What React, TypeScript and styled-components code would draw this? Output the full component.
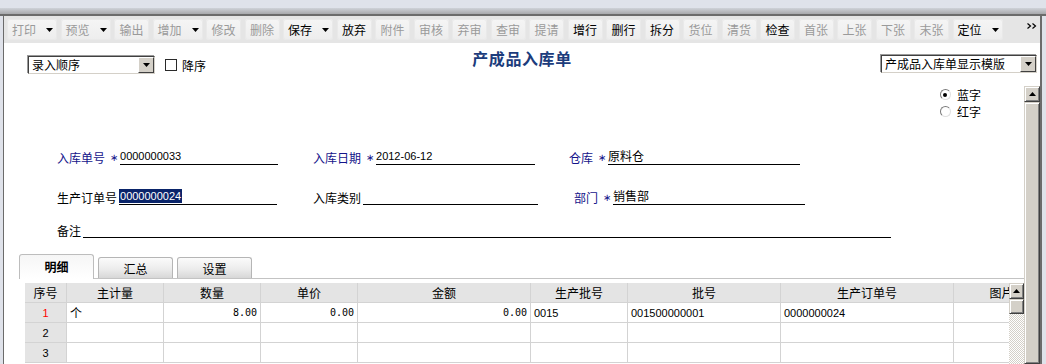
import styled, { createGlobalStyle } from "styled-components";

const GlobalStyle = createGlobalStyle`
  html, body {
    margin: 0;
    padding: 0;
    background: #dfe2ea;
  }
  body {
    font-family: "Noto Sans CJK SC", "Noto Sans", sans-serif;
    font-size: 12px;
    color: #000;
  }
  *, *::before, *::after {
    box-sizing: border-box;
  }
`;

const Screen = styled.div`
  width: 1046px;
  height: 364px;
  overflow: hidden;
  padding-top: 8px;
  background: #dfe2ea;
`;

const TopBand = styled.div`
  height: 8px;
  background: linear-gradient(#cfd2d8, #a7a8ab);
  border-bottom: 2px solid #6b6b6b;
`;

const Frame = styled.div`
  margin-left: 3px;
  width: 1039px;
  height: 348px;
  border-left: 1px solid #6b6b6b;
  border-right: 2px solid #6b6b6b;
  background: #fff;
  display: flex;
  flex-direction: column;
`;

/* ---------- toolbar ---------- */

const Toolbar = styled.div`
  height: 27px;
  flex: none;
  display: flex;
  align-items: center;
  gap: 3.5px;
  padding-left: 3px;
  background: #e5e5e5;
`;

const ToolButton = styled.div<{ $off?: boolean; $drop?: boolean }>`
  width: ${(p) => (p.$drop ? 50 : 35)}px;
  height: 21px;
  display: flex;
  align-items: center;
  justify-content: ${(p) => (p.$drop ? "flex-start" : "center")};
  padding-left: ${(p) => (p.$drop ? 5 : 0)}px;
  border-radius: 3px;
  background: linear-gradient(#f5f5f5, #ededed);
  box-shadow: inset 0 0 0 1px #e9e9e9;
  color: ${(p) => (p.$off ? "#9a9a9a" : "#000")};
  line-height: 14px;
  white-space: nowrap;
`;

const CaretBox = styled.span`
  display: inline-flex;
  margin-left: 10px;
`;

const Caret = ({ up }: { up?: boolean }) => (
  <svg width="7" height="4" viewBox="0 0 7 4">
    <polygon points={up ? "0,4 7,4 3.5,0" : "0,0 7,0 3.5,4"} fill="#000" />
  </svg>
);

const More = styled.div`
  margin-left: auto;
  margin-right: 3px;
  align-self: flex-start;
  margin-top: 7px;
  display: flex;
`;

/* ---------- header row ---------- */

const HeaderRow = styled.div`
  height: 43px;
  flex: none;
  display: grid;
  grid-template-columns: 1fr auto 1fr;
`;

const LeftTools = styled.div`
  display: flex;
  align-items: center;
  margin-top: 13px;
  padding-left: 24px;
  align-self: start;
`;

const Select = styled.div<{ $w: number }>`
  width: ${(p) => p.$w}px;
  height: 18px;
  display: flex;
  align-items: center;
  padding-left: 3px;
  border: 1px solid;
  border-color: #404040 #d4d0c8 #d4d0c8 #404040;
  box-shadow: -1px -1px 0 #9a9a9a;
  background: #fff;
  line-height: 14px;
  white-space: nowrap;
`;

const DropBtn = styled.div`
  margin-left: auto;
  width: 16px;
  height: 16px;
  flex: none;
  display: flex;
  align-items: center;
  justify-content: center;
  background: #d4d0c8;
  border: 1px solid;
  border-color: #fff #404040 #404040 #fff;
`;

const CheckBox = styled.span`
  width: 12px;
  height: 12px;
  margin-left: 10px;
  margin-right: 5px;
  border: 1px solid #2a2a2a;
  background: #fff;
`;

const Title = styled.div`
  margin-top: 6px;
  font-size: 16px;
  line-height: 18px;
  font-weight: bold;
  letter-spacing: 0.6px;
  color: #1c3c7c;
  align-self: start;
`;

const RightTools = styled.div`
  justify-self: end;
  align-self: start;
  margin-top: 12px;
  margin-right: 3px;
`;

/* ---------- body ---------- */

const Body = styled.div`
  flex: 1;
  min-height: 0;
  display: flex;
`;

const Main = styled.div`
  flex: 1;
  min-width: 0;
  display: flex;
  flex-direction: column;
`;

const VScroll = styled.div<{ $w: number }>`
  width: ${(p) => p.$w}px;
  flex: none;
  display: flex;
  flex-direction: column;
`;

const ScrollBtn = styled.div<{ $h: number }>`
  height: ${(p) => p.$h}px;
  flex: none;
  display: flex;
  align-items: center;
  justify-content: center;
  background: #d4d0c8;
  border: 1px solid;
  border-color: #d4d0c8 #404040 #404040 #d4d0c8;
  box-shadow: inset 1px 1px #fff, inset -1px -1px #808080;
`;

const ScrollThumb = styled(ScrollBtn)`
  flex: ${(p) => (p.$h ? "none" : "1")};
`;

const Track = styled.div`
  flex: 1;
  background: repeating-conic-gradient(#d4d0c8 0 25%, #fff 0 50%) 0 0 / 2px 2px;
`;

const RadioGroup = styled.div`
  align-self: flex-end;
  margin-right: 43px;
  display: flex;
  flex-direction: column;
`;

const RadioRow = styled.div`
  height: 17px;
  display: flex;
  align-items: center;
  gap: 6px;
  line-height: 14px;
`;

const RadioDot = styled.span<{ $on?: boolean }>`
  width: 11px;
  height: 11px;
  border-radius: 50%;
  border: 1px solid;
  border-color: #7a7a7a #e0e0e0 #e0e0e0 #7a7a7a;
  display: flex;
  align-items: center;
  justify-content: center;
  &::after {
    content: "";
    width: 4px;
    height: 4px;
    border-radius: 50%;
    background: ${(p) => (p.$on ? "#000" : "transparent")};
  }
`;

const Form = styled.div`
  margin-top: 27px;
  padding-left: 53px;
  display: flex;
  flex-direction: column;
`;

const FormRow = styled.div<{ $gap: number }>`
  margin-top: ${(p) => p.$gap}px;
  height: 18px;
  display: flex;
`;

const Cell = styled.div<{ $w?: number }>`
  width: ${(p) => (p.$w ? `${p.$w}px` : "auto")};
  flex: none;
  display: flex;
  align-items: flex-end;
`;

const Label = styled.span<{ $blue?: boolean }>`
  line-height: 14px;
  margin-right: 2px;
  white-space: nowrap;
  color: ${(p) => (p.$blue ? "#14148a" : "#000")};
`;

const Star = styled.span`
  width: 6px;
  margin-left: 4px;
  margin-right: 3px;
  display: inline-flex;
  justify-content: center;
  overflow: visible;
  font-family: "DejaVu Sans", sans-serif;
  font-size: 10px;
  line-height: 14px;
  color: #14148a;
`;

const ValueBox = styled.div<{ $w: number; $cjk?: boolean }>`
  width: ${(p) => p.$w}px;
  height: 18px;
  padding-top: 2px;
  border-bottom: 1px solid #000;
  font-family: ${(p) =>
    p.$cjk ? `"Noto Sans CJK SC", sans-serif` : `"Liberation Sans", sans-serif`};
  font-size: ${(p) => (p.$cjk ? 12 : 11)}px;
  line-height: 14px;
  white-space: nowrap;
`;

const Selected = styled.span`
  display: inline-block;
  background: #0a246a;
  color: #fff;
  padding: 0 1px;
  line-height: 14px;
`;

/* ---------- tabs + grid ---------- */

const TabStrip = styled.div`
  margin-top: 16px;
  margin-left: 15px;
  height: 25px;
  flex: none;
  display: flex;
  align-items: flex-end;
  gap: 4px;
  border-bottom: 1px solid #c3c3c3;
`;

const Tab = styled.div<{ $active?: boolean }>`
  width: 75px;
  height: ${(p) => (p.$active ? 25 : 21)}px;
  margin-bottom: ${(p) => (p.$active ? -1 : 0)}px;
  display: flex;
  align-items: center;
  justify-content: center;
  padding-top: ${(p) => (p.$active ? 0 : 2)}px;
  border: 1px solid ${(p) => (p.$active ? "#bdbdbd" : "#b5b5b5")};
  border-bottom: none;
  border-radius: 3px 3px 0 0;
  background: ${(p) =>
    p.$active
      ? "linear-gradient(#f6f6f6, #fff)"
      : "linear-gradient(#fbfbfb, #ececec 55%, #d7d7d7)"};
  font-weight: ${(p) => (p.$active ? "bold" : "normal")};
  line-height: 14px;
`;

const GridWrap = styled.div`
  margin-top: 4px;
  margin-left: 21px;
  flex: 1;
  min-height: 0;
  display: flex;
`;

const Viewport = styled.div`
  width: 984px;
  overflow: hidden;
`;

const cols = [42, 97, 97, 97, 173, 97, 153, 173, 96];

const GridRow = styled.div`
  display: grid;
  grid-template-columns: ${cols.map((c) => `${c}px`).join(" ")};
  width: ${cols.reduce((a, b) => a + b, 0)}px;
  height: 20px;
  border-bottom: 1px solid #d3d3d3;
`;

const GCell = styled.div<{ $head?: boolean; $align?: string; $mono?: boolean; $red?: boolean }>`
  border-right: 1px solid #d3d3d3;
  background: ${(p) => (p.$head ? "#e4e4e4" : "#fff")};
  display: flex;
  align-items: center;
  justify-content: ${(p) => p.$align || "flex-start"};
  padding: 0 3px;
  overflow: hidden;
  white-space: nowrap;
  line-height: 14px;
  color: ${(p) => (p.$red ? "#ff0000" : "#000")};
  font-family: ${(p) =>
    p.$mono
      ? `"DejaVu Sans Mono", "Liberation Mono", monospace`
      : `"Liberation Sans", "Noto Sans CJK SC", sans-serif`};
  font-size: ${(p) => (p.$mono ? 10 : 11)}px;
`;

const HeadText = styled.span`
  font-family: "Noto Sans CJK SC", sans-serif;
  font-size: 12px;
`;

const buttons: { t: string; off?: boolean; drop?: boolean }[] = [
  { t: "打印", off: true, drop: true },
  { t: "预览", off: true, drop: true },
  { t: "输出", off: true },
  { t: "增加", off: true, drop: true },
  { t: "修改", off: true },
  { t: "删除", off: true },
  { t: "保存", drop: true },
  { t: "放弃" },
  { t: "附件", off: true },
  { t: "审核", off: true },
  { t: "弃审", off: true },
  { t: "查审", off: true },
  { t: "提请", off: true },
  { t: "增行" },
  { t: "删行" },
  { t: "拆分" },
  { t: "货位", off: true },
  { t: "清货", off: true },
  { t: "检查" },
  { t: "首张", off: true },
  { t: "上张", off: true },
  { t: "下张", off: true },
  { t: "末张", off: true },
  { t: "定位", drop: true },
];

const headers = ["序号", "主计量", "数量", "单价", "金额", "生产批号", "批号", "生产订单号", "图片"];

export default function App() {
  return (
    <Screen>
      <GlobalStyle />
      <TopBand />
      <Frame>
        <Toolbar>
          {buttons.map((b) => (
            <ToolButton key={b.t} $off={b.off} $drop={b.drop}>
              {b.t}
              {b.drop && (
                <CaretBox>
                  <Caret />
                </CaretBox>
              )}
            </ToolButton>
          ))}
          <More>
            <svg width="10" height="6" viewBox="0 0 10 6">
              <path d="M0.5 0.5 L3.5 3 L0.5 5.5 M5.5 0.5 L8.5 3 L5.5 5.5" stroke="#000" strokeWidth="1.2" fill="none" />
            </svg>
          </More>
        </Toolbar>

        <HeaderRow>
          <LeftTools>
            <Select $w={127}>
              录入顺序
              <DropBtn>
                <Caret />
              </DropBtn>
            </Select>
            <CheckBox />
            降序
          </LeftTools>
          <Title>产成品入库单</Title>
          <RightTools>
            <Select $w={156}>
              产成品入库单显示模版
              <DropBtn>
                <Caret />
              </DropBtn>
            </Select>
          </RightTools>
        </HeaderRow>

        <Body>
          <Main>
            <RadioGroup>
              <RadioRow>
                <RadioDot $on />
                蓝字
              </RadioRow>
              <RadioRow>
                <RadioDot />
                红字
              </RadioRow>
            </RadioGroup>

            <Form>
              <FormRow $gap={0}>
                <Cell $w={256}>
                  <Label $blue>入库单号</Label>
                  <Star>∗</Star>
                  <ValueBox $w={158}>0000000033</ValueBox>
                </Cell>
                <Cell $w={256}>
                  <Label $blue>入库日期</Label>
                  <Star>∗</Star>
                  <ValueBox $w={159}>2012-06-12</ValueBox>
                </Cell>
                <Cell>
                  <Label $blue>仓库</Label>
                  <Star>∗</Star>
                  <ValueBox $w={192} $cjk>
                    原料仓
                  </ValueBox>
                </Cell>
              </FormRow>
              <FormRow $gap={22}>
                <Cell $w={256}>
                  <Label>生产订单号</Label>
                  <ValueBox $w={158}>
                    <Selected>0000000024</Selected>
                  </ValueBox>
                </Cell>
                <Cell $w={261}>
                  <Label>入库类别</Label>
                  <ValueBox $w={175} />
                </Cell>
                <Cell>
                  <Label $blue>部门</Label>
                  <Star>∗</Star>
                  <ValueBox $w={192} $cjk>
                    销售部
                  </ValueBox>
                </Cell>
              </FormRow>
              <FormRow $gap={15}>
                <Cell>
                  <Label>备注</Label>
                  <ValueBox $w={808} />
                </Cell>
              </FormRow>
            </Form>

            <TabStrip>
              <Tab $active>明细</Tab>
              <Tab>汇总</Tab>
              <Tab>设置</Tab>
            </TabStrip>

            <GridWrap>
              <Viewport>
                <GridRow>
                  {headers.map((h) => (
                    <GCell key={h} $head $align="center">
                      <HeadText>{h}</HeadText>
                    </GCell>
                  ))}
                </GridRow>
                <GridRow>
                  <GCell $head $align="center" $red>
                    1
                  </GCell>
                  <GCell>
                    <HeadText>个</HeadText>
                  </GCell>
                  <GCell $align="flex-end" $mono>
                    8.00
                  </GCell>
                  <GCell $align="flex-end" $mono>
                    0.00
                  </GCell>
                  <GCell $align="flex-end" $mono>
                    0.00
                  </GCell>
                  <GCell>0015</GCell>
                  <GCell>001500000001</GCell>
                  <GCell>0000000024</GCell>
                  <GCell />
                </GridRow>
                {[2, 3].map((n) => (
                  <GridRow key={n}>
                    <GCell $head $align="center">
                      {n}
                    </GCell>
                    {cols.slice(1).map((_, i) => (
                      <GCell key={i} />
                    ))}
                  </GridRow>
                ))}
              </Viewport>
              <VScroll $w={15}>
                <ScrollBtn $h={16}>
                  <Caret up />
                </ScrollBtn>
                <ScrollThumb $h={15} />
                <Track />
              </VScroll>
            </GridWrap>
          </Main>
          <VScroll $w={16}>
            <ScrollBtn $h={16}>
              <Caret up />
            </ScrollBtn>
            <ScrollThumb $h={0} />
          </VScroll>
        </Body>
      </Frame>
    </Screen>
  );
}
